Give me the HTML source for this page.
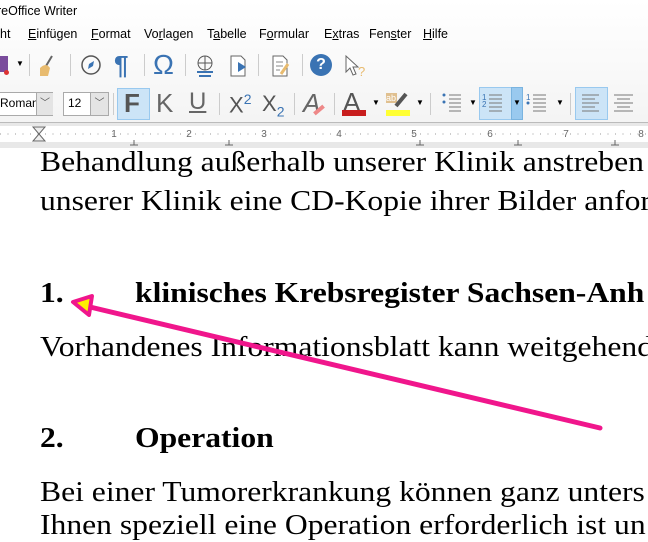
<!DOCTYPE html>
<html><head><meta charset="utf-8"><style>
*{margin:0;padding:0;box-sizing:border-box}
body{width:648px;height:536px;overflow:hidden;background:#fff;position:relative;font-family:"Liberation Sans",sans-serif}
.abs{position:absolute}
.ui{font-size:12px;color:#000}
.m{position:absolute;top:27px;font-size:12.5px;color:#000}
.sep{position:absolute;width:1px;height:22px;background:#ccc}
.doc{font-family:"Liberation Serif",serif;font-size:29px;line-height:33px;color:#000;position:absolute;white-space:nowrap;transform:scaleX(1.09);transform-origin:0 0}
.btnsel{position:absolute;background:#cce4f7;border:1px solid #99c9ef}
</style></head><body>
<div class="abs" style="left:0;top:0;width:648px;height:122px;background:linear-gradient(#fff,#f4f4f4)"></div>
<div class="abs ui" style="left:-3px;top:4px;font-size:12.5px">reOffice Writer</div>
<span class="m" style="left:0">ht</span>
<span class="m" style="left:28px"><u>E</u>infügen</span>
<span class="m" style="left:91px"><u>F</u>ormat</span>
<span class="m" style="left:144px">Vo<u>r</u>lagen</span>
<span class="m" style="left:207px">T<u>a</u>belle</span>
<span class="m" style="left:259px">F<u>o</u>rmular</span>
<span class="m" style="left:324px">E<u>x</u>tras</span>
<span class="m" style="left:369px">Fen<u>s</u>ter</span>
<span class="m" style="left:423px"><u>H</u>ilfe</span>
<!-- row 1 icons -->
<div class="abs" style="left:0;top:56px;width:8px;height:16px;background:#7a4c9c"></div>
<div class="abs" style="left:4px;top:70px;width:5px;height:5px;border-radius:50%;background:#d33"></div>
<div class="abs ui" style="left:16px;top:59px;font-size:8px">▼</div>
<div class="sep" style="left:29px;top:54px"></div>
<svg class="abs" style="left:36px;top:54px" width="22" height="24"><path d="M16 2 L10 12" stroke="#666" stroke-width="2"/><path d="M4 14 Q10 8 14 14 L12 22 L4 22Z" fill="#e8bb6f"/></svg>
<div class="sep" style="left:70px;top:54px"></div>
<svg class="abs" style="left:80px;top:54px" width="22" height="22"><circle cx="11" cy="11" r="9" fill="none" stroke="#555" stroke-width="1.5"/><path d="M14 7 L9 10 L8 15 L13 12Z" fill="#3a73b3"/></svg>
<div class="abs" style="left:114px;top:50px;font-size:26px;color:#3a73b3;font-weight:bold">¶</div>
<div class="sep" style="left:144px;top:54px"></div>
<div class="abs" style="left:153px;top:49px;font-size:28px;color:#3a73b3">Ω</div>
<div class="sep" style="left:185px;top:54px"></div>
<svg class="abs" style="left:193px;top:54px" width="24" height="24"><circle cx="12" cy="9" r="7" fill="none" stroke="#555"/><path d="M5 9H19M12 2V16" stroke="#555"/><path d="M4 18H20M6 22H18" stroke="#3a73b3" stroke-width="2"/></svg>
<svg class="abs" style="left:228px;top:54px" width="22" height="24"><path d="M3 2H13L17 6V22H3Z" fill="#fff" stroke="#666"/><path d="M10 8L18 13L10 18Z" fill="#3a73b3"/></svg>
<div class="sep" style="left:258px;top:54px"></div>
<svg class="abs" style="left:270px;top:54px" width="22" height="24"><path d="M3 2H13L17 6V22H3Z" fill="#fff" stroke="#666"/><path d="M6 8H13M6 12H13M6 16H10" stroke="#888"/><path d="M18 10L11 20" stroke="#e8bb6f" stroke-width="3"/></svg>
<div class="sep" style="left:302px;top:54px"></div>
<div class="abs" style="left:310px;top:54px;width:22px;height:22px;border-radius:50%;background:#3a73b3;color:#fff;font-weight:bold;font-size:16px;text-align:center;line-height:22px">?</div>
<svg class="abs" style="left:344px;top:54px" width="24" height="24"><path d="M2 2L2 18L6 14L9 21L12 20L9 13L14 13Z" fill="#fff" stroke="#666"/><text x="14" y="22" font-size="13" fill="#e8bb6f" font-family="Liberation Sans">?</text></svg>
<!-- row 2 -->
<div class="abs" style="left:-2px;top:92px;width:55px;height:24px;border:1px solid #aaa;background:#fff"></div>
<div class="abs ui" style="left:0;top:96px">Roman</div>
<div class="abs" style="left:36px;top:93px;width:17px;height:22px;background:#e4e4e4;border-left:1px solid #aaa;font-size:10px;color:#555;text-align:center;line-height:22px">﹀</div>
<div class="abs" style="left:63px;top:92px;width:46px;height:24px;border:1px solid #aaa;background:#fff"></div>
<div class="abs ui" style="left:68px;top:96px">12</div>
<div class="abs" style="left:90px;top:93px;width:18px;height:22px;background:#e4e4e4;border-left:1px solid #aaa;font-size:10px;color:#555;text-align:center;line-height:22px">﹀</div>
<div class="sep" style="left:113px;top:93px"></div>
<div class="btnsel" style="left:117px;top:88px;width:33px;height:32px"></div>
<div class="abs" style="left:124px;top:88px;font-size:26px;font-weight:bold;color:#555">F</div>
<div class="abs" style="left:156px;top:88px;font-size:26px;color:#666">K</div>
<div class="abs" style="left:189px;top:88px;font-size:24px;color:#666;text-decoration:underline">U</div>
<div class="sep" style="left:219px;top:93px"></div>
<div class="abs" style="left:229px;top:91px;font-size:22px;color:#555">X<sup style="font-size:14px;color:#3a73b3">2</sup></div>
<div class="abs" style="left:262px;top:91px;font-size:22px;color:#555">X<sub style="font-size:14px;color:#3a73b3">2</sub></div>
<div class="sep" style="left:294px;top:93px"></div>
<div class="abs" style="left:303px;top:88px;font-size:26px;color:#666;font-style:italic">A</div>
<div class="abs" style="left:313px;top:108px;width:12px;height:4px;background:#e88;transform:rotate(-40deg)"></div>
<div class="sep" style="left:334px;top:93px"></div>
<div class="abs" style="left:343px;top:87px;font-size:26px;color:#555">A</div>
<div class="abs" style="left:342px;top:110px;width:24px;height:6px;background:#c81e1e"></div>
<div class="abs ui" style="left:372px;top:98px;font-size:8px">▼</div>
<div class="abs" style="left:386px;top:93px;width:11px;height:10px;background:#e0c090;font-size:9px;color:#fff;line-height:10px">ab</div>
<svg class="abs" style="left:386px;top:92px" width="24" height="20"><path d="M20 2L10 14" stroke="#555" stroke-width="4"/></svg>
<div class="abs" style="left:386px;top:110px;width:24px;height:6px;background:#ffff33"></div>
<div class="abs ui" style="left:416px;top:98px;font-size:8px">▼</div>
<div class="sep" style="left:430px;top:93px"></div>
<svg class="abs" style="left:441px;top:92px" width="26" height="24"><g fill="#3a73b3"><circle cx="3" cy="3" r="1.5"/><circle cx="3" cy="10" r="1.5"/></g><g stroke="#777"><path d="M8 3H20M8 7H20M8 11H20M8 15H20M8 19H20"/></g></svg>
<div class="abs ui" style="left:469px;top:98px;font-size:8px">▼</div>
<div class="btnsel" style="left:479px;top:87px;width:44px;height:33px"></div>
<div class="abs" style="left:511px;top:87px;width:12px;height:33px;background:#99c9ef;border:1px solid #7ab4e0"></div>
<div class="abs ui" style="left:513px;top:98px;font-size:8px">▼</div>
<svg class="abs" style="left:482px;top:92px" width="26" height="24"><text x="0" y="8" font-size="8" fill="#3a73b3" font-family="Liberation Sans">1</text><text x="0" y="15" font-size="8" fill="#3a73b3" font-family="Liberation Sans">2</text><g stroke="#777"><path d="M7 3H20M7 7H20M7 11H20M7 15H20M7 19H20"/></g></svg>
<svg class="abs" style="left:526px;top:92px" width="26" height="24"><text x="0" y="8" font-size="8" fill="#3a73b3" font-family="Liberation Sans">1</text><circle cx="2" cy="11" r="1.5" fill="#3a73b3"/><g stroke="#777"><path d="M7 3H20M7 7H20M7 11H20M7 15H20M7 19H20"/></g></svg>
<div class="abs ui" style="left:556px;top:98px;font-size:8px">▼</div>
<div class="sep" style="left:570px;top:93px"></div>
<div class="btnsel" style="left:575px;top:87px;width:33px;height:33px"></div>
<svg class="abs" style="left:581px;top:92px" width="22" height="24"><g stroke="#777"><path d="M1 3H18M1 7H14M1 11H18M1 15H14M1 19H18"/></g></svg>
<svg class="abs" style="left:613px;top:92px" width="22" height="24"><g stroke="#777"><path d="M1 3H20M4 7H17M1 11H20M4 15H17M1 19H20"/></g></svg>
<!-- ruler -->
<div class="abs" style="left:0;top:122px;width:648px;height:26px;background:#e8e8e8;border-top:1px solid #bbb"></div>
<div class="abs" style="left:0;top:126px;width:648px;height:16px;background:#fff"></div>
<svg class="abs" style="left:0;top:126px" width="648" height="22">
<g stroke="#999"><path d="M0 8H648" stroke-dasharray="1 6.5"/></g>
<g font-size="10" fill="#666" font-family="Liberation Sans" text-anchor="middle"><text x="114" y="11">1</text><text x="189" y="11">2</text><text x="264" y="11">3</text><text x="339" y="11">4</text><text x="414" y="11">5</text><text x="490" y="11">6</text><text x="566" y="11">7</text><text x="641" y="11">8</text></g>
<g stroke="#666"><path d="M134 14V19M130 19H138M229 14V19M225 19H233M420 14V19M416 19H424M518 14V19M514 19H522M615 14V19M611 19H619"/></g>
<path d="M33 1H45L39 8L45 15H33L39 8Z" fill="#eee" stroke="#666"/>
</svg>
<!-- document -->
<div class="doc" style="left:40px;top:146px">Behandlung außerhalb unserer Klinik anstreben</div>
<div class="doc" style="left:40px;top:185px">unserer Klinik eine CD-Kopie ihrer Bilder anfor</div>
<div class="doc" style="left:40px;top:277px;font-weight:bold">1.</div>
<div class="doc" style="left:135px;top:277px;font-weight:bold">klinisches Krebsregister Sachsen-Anh</div>
<div class="doc" style="left:40px;top:331px">Vorhandenes Informationsblatt kann weitgehend</div>
<div class="doc" style="left:40px;top:422px;font-weight:bold">2.</div>
<div class="doc" style="left:135px;top:422px;font-weight:bold">Operation</div>
<div class="doc" style="left:40px;top:476px">Bei einer Tumorerkrankung können ganz unters</div>
<div class="doc" style="left:40px;top:509px">Ihnen speziell eine Operation erforderlich ist un</div>
<svg class="abs" style="left:0;top:0" width="648" height="536">
<path d="M90 307 L600 428" stroke="#f0168c" stroke-width="5" stroke-linecap="round"/>
<path d="M73 302 L92 296 L89 315 Z" fill="#ffee00" stroke="#f0168c" stroke-width="4" stroke-linejoin="round"/>
</svg>
</body></html>
